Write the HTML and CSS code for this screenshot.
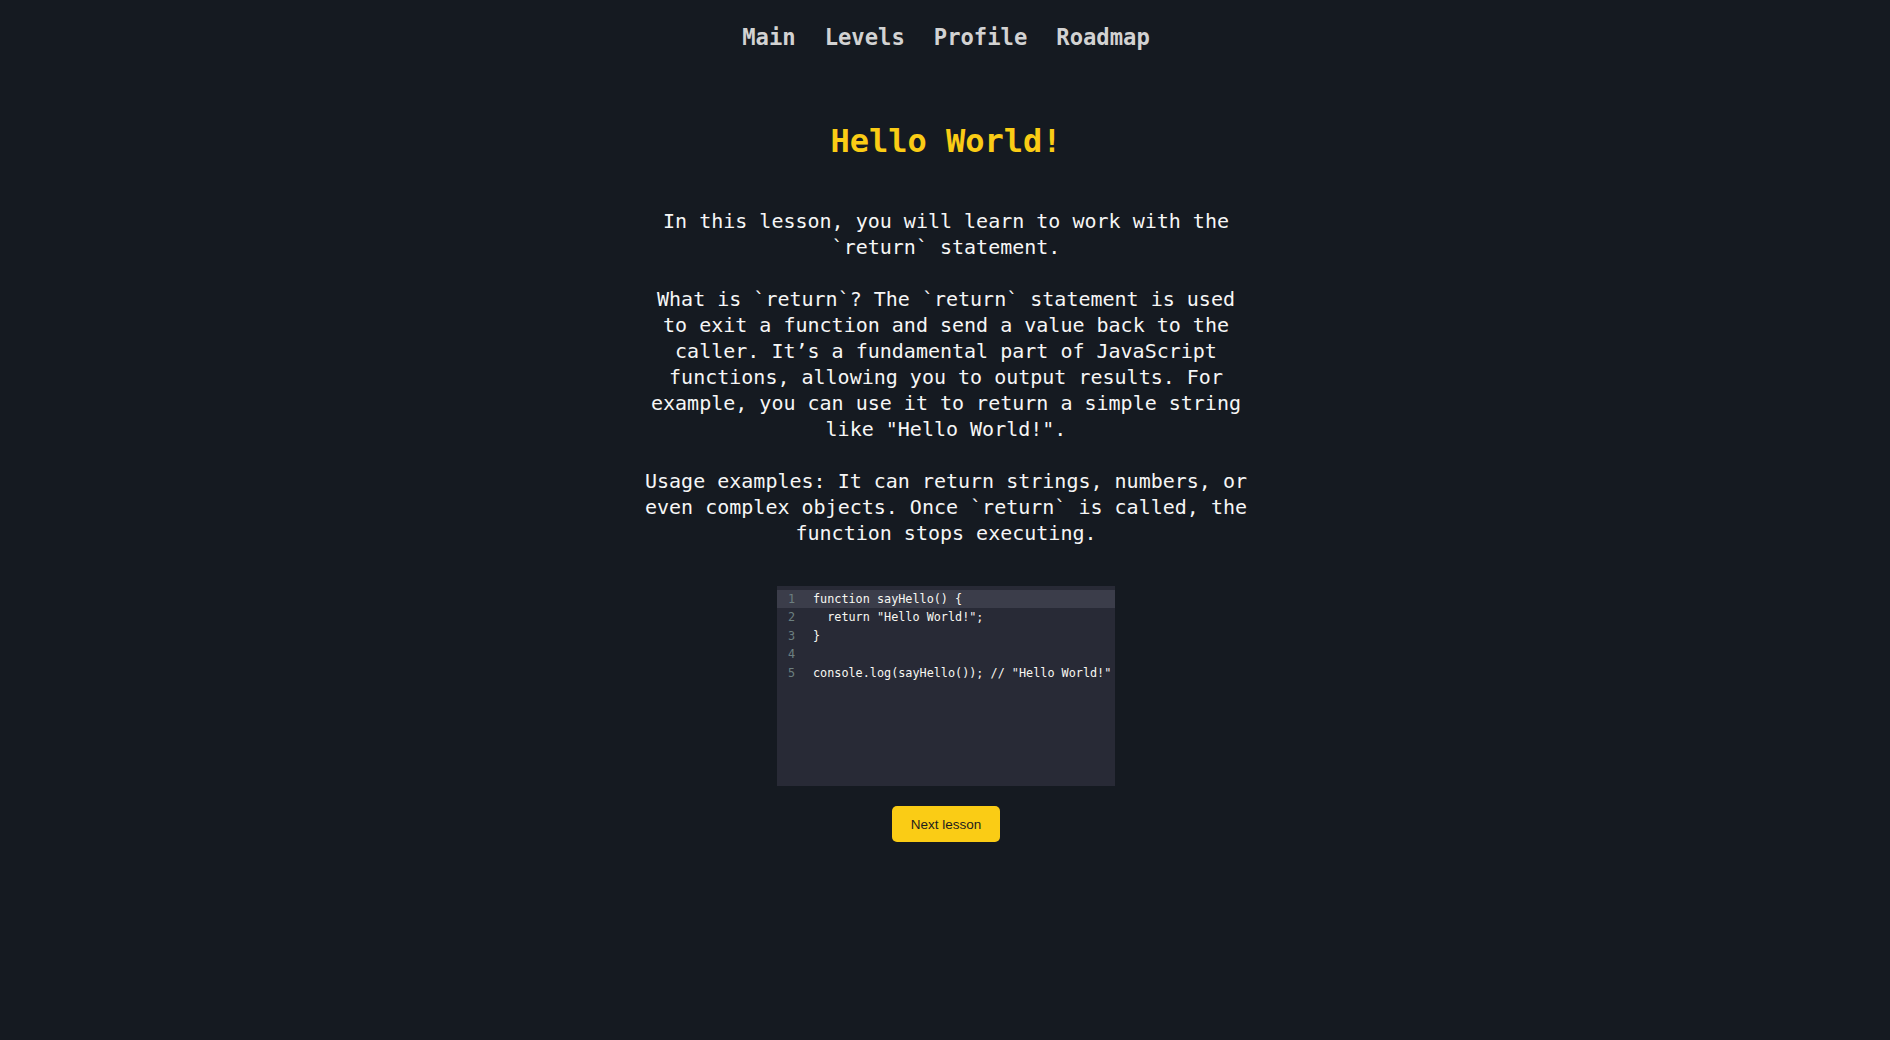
FILE: index.html
```html
<!DOCTYPE html>
<html lang="en">
<head>
<meta charset="utf-8">
<title>Hello World!</title>
<link rel="stylesheet" href="styles.css">
</head>
<body>
<nav class="nav">
  <a class="nav-link" href="#">Main</a>
  <a class="nav-link" href="#">Levels</a>
  <a class="nav-link" href="#">Profile</a>
  <a class="nav-link" href="#">Roadmap</a>
</nav>
<main class="lesson">
  <h1 class="lesson-title">Hello World!</h1>
  <div class="lesson-text">
    <p class="para">In this lesson, you will learn to work with the `return` statement.</p>
    <p class="para">What is `return`? The `return` statement is used to exit a function and send a value back to the caller. It’s a fundamental part of JavaScript functions, allowing you to output results. For example, you can use it to return a simple string like "Hello World!".</p>
    <p class="para">Usage examples: It can return strings, numbers, or even complex objects. Once `return` is called, the function stops executing.</p>
  </div>
  <div class="editor">
    <div class="line active"><span class="ln">1</span><span class="code">function sayHello() {</span></div>
    <div class="line"><span class="ln">2</span><span class="code">  return "Hello World!";</span></div>
    <div class="line"><span class="ln">3</span><span class="code">}</span></div>
    <div class="line"><span class="ln">4</span><span class="code"></span></div>
    <div class="line"><span class="ln">5</span><span class="code">console.log(sayHello()); // "Hello World!"</span></div>
  </div>
  <button class="next-btn" type="button">Next lesson</button>
</main>
</body>
</html>
```
FILE: styles.css
```css
html, body {
  margin: 0;
  padding: 0;
}

body {
  background: #151a21;
  font-family: "DejaVu Sans Mono", "Liberation Mono", monospace;
  color: #f4f4f4;
  min-height: 1040px;
  padding-left: 2px;
}

.nav {
  display: flex;
  justify-content: center;
  gap: 29px;
  padding-top: 22px;
}

.nav-link {
  font-size: 22.2px;
  line-height: 30px;
  font-weight: bold;
  color: #d2d2d2;
  text-decoration: none;
}

.lesson {
  display: flex;
  flex-direction: column;
  align-items: center;
}

.lesson-title {
  margin: 69px 0 0;
  font-size: 32px;
  line-height: 40px;
  font-weight: bold;
  color: #facc15;
}

.lesson-text {
  margin-top: 47px;
  width: 606px;
  text-align: center;
  font-size: 20px;
  line-height: 26px;
  color: #f6f6f6;
}

.para {
  margin: 0 0 26px;
}

.para:last-child {
  margin-bottom: 0;
}

.editor {
  margin-top: 40px;
  width: 338px;
  height: 200px;
  box-sizing: border-box;
  padding-top: 4px;
  background: #282a36;
  overflow: hidden;
  font-family: "DejaVu Sans Mono", monospace;
  font-size: 11.8px;
}

.line {
  display: flex;
  height: 18.4px;
  line-height: 18.4px;
  white-space: pre;
}

.line.active {
  background: #3b3d4a;
}

.ln {
  flex: 0 0 36px;
  box-sizing: border-box;
  padding-left: 11px;
  color: #6c7f80;
}

.code {
  color: #f8f8f2;
}

.next-btn {
  margin-top: 20px;
  width: 108px;
  height: 36px;
  border: none;
  border-radius: 5px;
  background: #facc15;
  color: #1d1d1d;
  font-family: "Liberation Sans", Arial, sans-serif;
  font-size: 13.5px;
  padding: 0;
}
```
